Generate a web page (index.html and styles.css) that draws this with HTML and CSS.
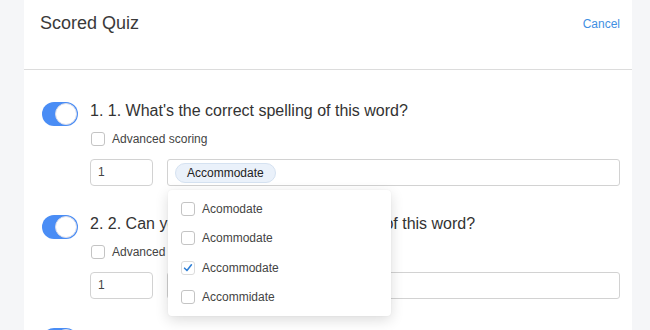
FILE: index.html
```html
<!DOCTYPE html>
<html>
<head>
<meta charset="utf-8">
<link rel="stylesheet" href="styles.css">
</head>
<body>
<div class="panel">
  <div class="header">
    <h1 class="title">Scored Quiz</h1>
    <a class="cancel">Cancel</a>
  </div>
  <div class="questions">
    <div class="question">
      <div class="toggle"><span class="knob"></span></div>
      <div class="q-body">
        <div class="q-title">1. 1. What's the correct spelling of this word?</div>
        <label class="adv"><span class="cb"></span>Advanced scoring</label>
        <div class="inputs">
          <div class="points">1</div>
          <div class="tags">
            <span class="chip">Accommodate</span>
            <div class="dropdown">
              <div class="opt"><span class="cb"></span>Acomodate</div>
              <div class="opt"><span class="cb"></span>Acommodate</div>
              <div class="opt"><span class="cb checked"><svg viewBox="0 0 14 14" width="14" height="14"><path d="M3 7.2 L5.8 10 L11 3.2" fill="none" stroke="#2f7fd6" stroke-width="1.8" stroke-linecap="round" stroke-linejoin="round"/></svg></span>Accommodate</div>
              <div class="opt"><span class="cb"></span>Accommidate</div>
            </div>
          </div>
        </div>
      </div>
    </div>
    <div class="question">
      <div class="toggle"><span class="knob"></span></div>
      <div class="q-body">
        <div class="q-title">2. 2. Can you choose the correct spelling of this word?</div>
        <label class="adv"><span class="cb"></span>Advanced scoring</label>
        <div class="inputs">
          <div class="points">1</div>
          <div class="tags"></div>
        </div>
      </div>
    </div>
    <div class="question">
      <div class="toggle"><span class="knob"></span></div>
    </div>
  </div>
</div>
</body>
</html>
```
FILE: styles.css
```css
* { box-sizing: border-box; }
html, body { margin: 0; padding: 0; }
body {
  background: #f5f6f8;
  font-family: "Liberation Sans", Arial, sans-serif;
  color: #333;
  height: 330px;
  overflow: hidden;
}
.panel {
  margin-left: 24px;
  width: 608px;
  background: #fff;
  height: 330px;
  overflow: hidden;
}
.header {
  height: 70px;
  border-bottom: 1px solid #dcdcdc;
  display: flex;
  justify-content: space-between;
  align-items: flex-start;
  padding: 12px 12px 0 16px;
}
.title {
  margin: 0;
  font-size: 18px;
  line-height: 22px;
  font-weight: normal;
  color: #3a3a3a;
}
.cancel {
  font-size: 12px;
  line-height: 22px;
  color: #3f8fe2;
  padding-top: 1px;
}
.questions {
  padding: 30px 12px 0 18px;
  display: flex;
  flex-direction: column;
  gap: 27px;
}
.question {
  display: flex;
  gap: 12px;
  align-items: flex-start;
}
.toggle {
  flex: none;
  width: 36px;
  height: 24px;
  margin-top: 2px;
  border-radius: 12px;
  background: #4a8df5;
  position: relative;
}
.knob {
  position: absolute;
  right: 1px;
  top: 1px;
  width: 22px;
  height: 22px;
  border-radius: 50%;
  background: #fff;
  border: 1px solid #d8dcea;
}
.q-body {
  flex: 1;
  display: flex;
  flex-direction: column;
}
.q-title {
  font-size: 16px;
  line-height: 22px;
  color: #333;
}
.adv {
  display: flex;
  align-items: center;
  gap: 7px;
  margin-top: 7px;
  font-size: 12px;
  line-height: 20px;
  color: #444;
  padding-left: 1px;
}
.cb {
  flex: none;
  width: 14px;
  height: 14px;
  border: 1px solid #c4c4c4;
  border-radius: 3px;
  background: #fff;
  display: inline-flex;
  align-items: center;
  justify-content: center;
}
.cb.checked { border-color: #dcdcdc; }
.cb svg { display: block; }
.inputs {
  display: flex;
  gap: 14px;
  margin-top: 10px;
}
.points {
  width: 63px;
  height: 27px;
  border: 1px solid #d2d2d2;
  border-radius: 4px;
  font-size: 12px;
  line-height: 25px;
  padding-left: 7px;
  color: #444;
}
.tags {
  flex: 1;
  height: 27px;
  border: 1px solid #d2d2d2;
  border-radius: 3px;
  padding: 3px 7px;
  position: relative;
  display: flex;
  align-items: center;
}
.chip {
  display: inline-block;
  height: 20px;
  line-height: 18px;
  padding: 0 11px;
  border-radius: 10px;
  background: #eaf1fa;
  border: 1px solid #d5e2f1;
  font-size: 12px;
  color: #222;
}
.dropdown {
  position: absolute;
  left: 0;
  top: 30px;
  width: 223px;
  padding: 4px 0;
  background: #fff;
  border-radius: 4px;
  box-shadow: 0 4px 14px rgba(0, 0, 0, 0.14), 0 0 2px rgba(0, 0, 0, 0.05);
  z-index: 5;
}
.opt {
  height: 29.5px;
  display: flex;
  align-items: center;
  gap: 7px;
  padding-left: 13px;
  font-size: 12px;
  color: #444;
}
```
